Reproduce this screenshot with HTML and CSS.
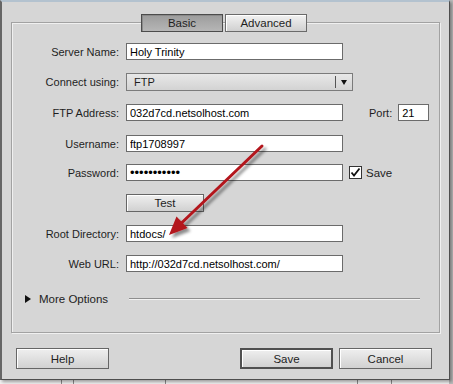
FILE: index.html
```html
<!DOCTYPE html>
<html lang="en">
  <head>
    <meta charset="UTF-8">
    <title>Site Setup - Server</title>
    <link rel="stylesheet" href="styles.css">
  </head>
  <body>
    <div class="desk">
      <div class="dialog">

        <div class="group">
          <div class="tabs">
            <div class="tab active">Basic</div>
            <div class="tab">Advanced</div>
          </div>

          <div class="row first">
            <label class="lbl">Server Name:</label>
            <input class="field" type="text" value="Holy Trinity">
          </div>

          <div class="row connect">
            <label class="lbl">Connect using:</label>
            <div class="select">
              <span class="select-text">FTP</span>
              <span class="select-div"></span>
              <span class="select-arrow"></span>
            </div>
          </div>

          <div class="row">
            <label class="lbl">FTP Address:</label>
            <input class="field" type="text" value="032d7cd.netsolhost.com">
            <label class="port-lbl">Port:</label>
            <input class="field port" type="text" value="21">
          </div>

          <div class="row user">
            <label class="lbl">Username:</label>
            <input class="field" type="text" value="ftp1708997">
          </div>

          <div class="row pass">
            <label class="lbl">Password:</label>
            <input class="field" type="password" value="abcdefghijk">
            <span class="check">
              <svg width="13" height="13" viewBox="0 0 13 13">
                <rect x="0.5" y="0.5" width="12" height="12" fill="#fff" stroke="#333"/>
                <path d="M2.5 6.5 L5 9.5 L10.5 2.5" fill="none" stroke="#111" stroke-width="1.8"/>
              </svg>
            </span>
            <span class="check-lbl">Save</span>
          </div>

          <div class="row test">
            <span class="lbl"></span>
            <button class="btn test-btn">Test</button>
          </div>

          <div class="row">
            <label class="lbl">Root Directory:</label>
            <input class="field" type="text" value="htdocs/">
          </div>

          <div class="row">
            <label class="lbl">Web URL:</label>
            <input class="field" type="text" value="http://032d7cd.netsolhost.com/">
          </div>

          <div class="more">
            <span class="more-tri"></span>
            <span class="more-text">More Options</span>
            <span class="more-line"></span>
          </div>
        </div>

        <div class="buttons">
          <button class="btn big help">Help</button>
          <button class="btn big save">Save</button>
          <button class="btn big cancel">Cancel</button>
        </div>

        <!-- red annotation arrow drawn over the dialog -->
        <svg class="arrow" width="453" height="384" viewBox="0 0 453 384">
          <defs>
            <filter id="shadow" x="-20%" y="-20%" width="140%" height="140%">
              <feDropShadow dx="3" dy="3" stdDeviation="1.6" flood-color="#000" flood-opacity="0.45"/>
            </filter>
          </defs>
          <g filter="url(#shadow)">
            <line x1="262" y1="146" x2="181" y2="223.5" stroke="#b3141c" stroke-width="3" stroke-linecap="round"/>
            <polygon points="169,235 187.5,228 176.5,216.5" fill="#b3141c"/>
          </g>
        </svg>
      </div>

      <div class="strip">
        <span class="mark m1"></span>
        <span class="mark m2"></span>
        <span class="mark m3"></span>
        <span class="mark m4"></span>
        <span class="mark m5"></span>
      </div>
    </div>
  </body>
</html>
```

FILE: styles.css
```css
body {
  margin: 0;
  width: 453px;
  height: 384px;
  overflow: hidden;
  background: #bcbcbc;
  font-family: "Liberation Sans", Arial, sans-serif;
  font-size: 11px;
  color: #1e1e1e;
}

.desk {
  width: 453px;
  height: 384px;
}

.dialog {
  position: relative;
  box-sizing: border-box;
  width: 450px;
  height: 380px;
  background: #d6d6d6;
  border-top: 2px solid #b3c2cf;
  border-left: 2px solid #666;
  border-right: 1px solid #4e4e4e;
  border-bottom: 1px solid #4e4e4e;
  box-shadow: 2px 2px 3px rgba(0, 0, 0, 0.35);
  z-index: 1;
}

.group {
  box-sizing: border-box;
  width: 429px;
  height: 311px;
  margin: 20px 0 0 9px;
  border: 1px solid #a2a2a2;
  box-shadow: inset 1px 1px 0 #f0f0f0, 1px 1px 0 #f0f0f0;
}

.tabs {
  display: flex;
  gap: 2px;
  margin: -9px 0 0 129px;
}

.tab {
  box-sizing: border-box;
  width: 82px;
  height: 18px;
  line-height: 16px;
  text-align: center;
  font-size: 11.5px;
  border: 1px solid #6a6a6a;
  background: linear-gradient(#f2f2f2, #d0d0d0);
  box-shadow: inset 1px 1px 0 #fff;
}

.tab.active {
  border-color: #4c4c4c;
  background: linear-gradient(#9c9c9c, #b6b6b6);
  box-shadow: inset 1px 1px 0 #8a8a8a;
}

.row {
  display: flex;
  align-items: center;
  height: 17px;
  margin-top: 13px;
}

.row.first { margin-top: 11px; }
.row.connect { height: 18px; }
.row.user { margin-top: 14px; }
.row.pass { margin-top: 12px; }
.row.test { height: 18px; }

.lbl {
  width: 107px;
  margin-right: 7px;
  text-align: right;
  flex-shrink: 0;
}

.field {
  box-sizing: border-box;
  width: 217px;
  height: 17px;
  margin: 0;
  padding: 0 3px;
  border: 1px solid #6b6b6b;
  background: #fff;
  font-family: "Liberation Sans", Arial, sans-serif;
  font-size: 11px;
  color: #000;
  outline: none;
}

.field[type="password"] {
  font-size: 13px;
  letter-spacing: 0;
}

.select {
  position: relative;
  box-sizing: border-box;
  width: 227px;
  height: 18px;
  display: flex;
  align-items: center;
  border: 1px solid #7b7b7b;
  background: linear-gradient(#e8e8e8, #d3d3d3);
}

.select-text {
  padding-left: 7px;
  flex: 1;
}

.select-div {
  width: 1px;
  height: 12px;
  background: #555;
  margin-right: 5px;
}

.select-arrow {
  width: 0;
  height: 0;
  border-left: 3.5px solid transparent;
  border-right: 3.5px solid transparent;
  border-top: 5px solid #111;
  margin-right: 5px;
}

.port-lbl {
  margin-left: 26px;
  margin-right: 6px;
}

.field.port {
  width: 31px;
}

.check {
  display: flex;
  margin-left: 6px;
}

.check-lbl {
  margin-left: 4px;
  font-size: 11.5px;
}

.btn {
  box-sizing: border-box;
  margin: 0;
  padding: 0;
  border: 1px solid #666;
  background: linear-gradient(#efefef, #d1d1d1);
  box-shadow: inset 1px 1px 0 #fff;
  font-family: "Liberation Sans", Arial, sans-serif;
  font-size: 11.5px;
  color: #1e1e1e;
}

.test-btn {
  width: 78px;
  height: 18px;
}

.more {
  display: flex;
  align-items: center;
  height: 14px;
  margin-top: 20px;
}

.more-tri {
  width: 0;
  height: 0;
  margin-left: 13px;
  border-top: 4px solid transparent;
  border-bottom: 4px solid transparent;
  border-left: 6px solid #111;
}

.more-text {
  margin-left: 8px;
  font-size: 11.5px;
  color: #222;
}

.more-line {
  width: 291px;
  height: 0;
  margin-left: 21px;
  border-top: 1px solid #8e8e8e;
  border-bottom: 1px solid #f2f2f2;
}

.buttons {
  display: flex;
  margin: 15px 0 0 14px;
}

.btn.big {
  width: 93px;
  height: 21px;
}

.help { margin-right: 131px; }

.save {
  width: 95px;
  border: 2px solid #505050;
  margin-right: 6px;
}

.arrow {
  position: absolute;
  left: -2px;
  top: -2px;
  pointer-events: none;
}

.strip {
  position: relative;
  height: 4px;
  width: 449px;
  background: #f1f1f1;
}

.mark {
  position: absolute;
  top: 0;
  width: 1px;
  height: 4px;
  background: #8a8a8a;
}

.m1 { left: 61px; }
.m2 { left: 73px; }
.m3 { left: 165px; }
.m4 { left: 357px; }
.m5 { left: 391px; }
```
